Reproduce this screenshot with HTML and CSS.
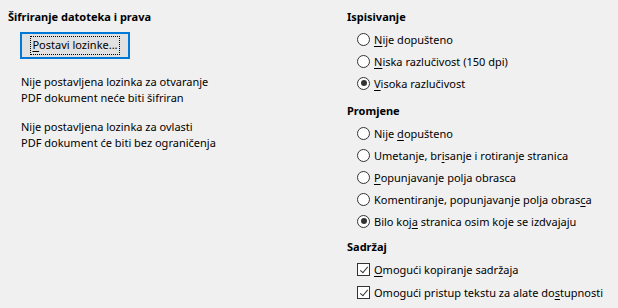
FILE: index.html
```html
<!DOCTYPE html>
<html lang="hr">
<head>
    <meta charset="UTF-8">
    <title>Sigurnost PDF-a</title>
    <link rel="stylesheet" href="styles.css">
</head>
<body>
    <div class="page">
        <div class="column left">
            <div class="heading">Šifriranje datoteka i prava</div>
            <button class="btn"><span class="focus"><u>P</u>ostavi lozinke...</span></button>
            <div class="note">
                <div>Nije postavljena lozinka za otvaranje</div>
                <div>PDF dokument neće biti šifriran</div>
            </div>
            <div class="note">
                <div>Nije postavljena lozinka za ovlasti</div>
                <div>PDF dokument će biti bez ograničenja</div>
            </div>
        </div>

        <div class="column right">
            <div class="group">
                <div class="heading">Ispisivanje</div>
                <div class="row"><span class="radio"></span><span><u>N</u>ije dopušteno</span></div>
                <div class="row"><span class="radio"></span><span><u>N</u>iska razlučivost (150 dpi)</span></div>
                <div class="row"><span class="radio checked"></span><span><u>V</u>isoka razlučivost</span></div>
            </div>

            <div class="group changes">
                <div class="heading">Promjene</div>
                <div class="row"><span class="radio"></span><span>Nije <u>d</u>opušteno</span></div>
                <div class="row"><span class="radio"></span><span>Umetanje, br<u>i</u>sanje i rotiranje stranica</span></div>
                <div class="row"><span class="radio"></span><span><u>P</u>opunjavanje polja obrasca</span></div>
                <div class="row"><span class="radio"></span><span>Komentiranje, popunjavanje polja obras<u>c</u>a</span></div>
                <div class="row"><span class="radio checked"></span><span>Bilo koj<u>a</u> stranica osim koje se izdvajaju</span></div>
            </div>

            <div class="group content">
                <div class="heading">Sadržaj</div>
                <div class="row"><span class="check"></span><span><u>O</u>mogući kopiranje sadržaja</span></div>
                <div class="row"><span class="check"></span><span>Omogući pristup tekstu za alate do<u>s</u>tupnosti</span></div>
            </div>
        </div>
    </div>
</body>
</html>
```

FILE: styles.css
```css
body {
    margin: 0;
    background: #f0f0f0;
    font-family: "Noto Sans", sans-serif;
    font-size: 11px;
    color: #000;
}

u {
    text-decoration: underline;
    text-underline-offset: 2px;
}

.page {
    display: grid;
    grid-template-columns: 339px 1fr;
    padding: 6px 0 0 8px;
}

.heading {
    font-weight: bold;
    line-height: 22px;
}

/* left column */
.btn {
    display: block;
    box-sizing: border-box;
    width: 110px;
    height: 27px;
    margin: 4px 0 0 12px;
    padding: 2px 8px;
    border: 2px solid #0078d7;
    background: #e1e1e1;
    font: inherit;
    color: #000;
}

.btn .focus {
    display: block;
    height: 17px;
    line-height: 16px;
    border: 1px dotted #000;
}

.note {
    margin: 15px 0 0 13px;
    line-height: 16px;
}

.note + .note {
    margin-top: 13px;
}

/* right column */
.changes {
    margin-top: 6px;
}

.content {
    margin-top: 4px;
}

.row {
    display: flex;
    align-items: center;
    gap: 4px;
    height: 22px;
    padding-left: 10px;
}

.content .row {
    height: 23px;
}

.radio,
.check {
    box-sizing: border-box;
    width: 13px;
    height: 13px;
    border: 1px solid #333;
    background: #fff;
    flex: none;
    position: relative;
}

.radio {
    border-radius: 50%;
}

.radio.checked::after {
    content: "";
    position: absolute;
    left: 2.5px;
    top: 2.5px;
    width: 6px;
    height: 6px;
    border-radius: 50%;
    background: #333;
}

.check::after {
    content: "";
    position: absolute;
    left: 3.5px;
    top: 0.5px;
    width: 3px;
    height: 7px;
    border: solid #333;
    border-width: 0 1px 1px 0;
    transform: rotate(40deg);
}
```
